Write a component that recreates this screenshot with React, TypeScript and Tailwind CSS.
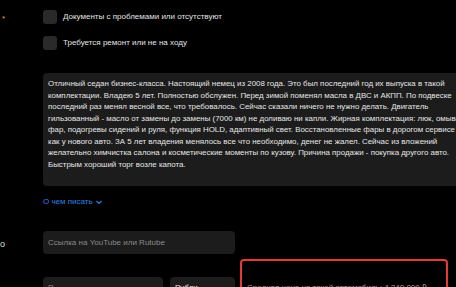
import React from 'react';

const LINES = [
  'Отличный седан бизнес-класса. Настоящий немец из 2008 года. Это был последний год их выпуска в такой',
  'комплектации. Владею 5 лет. Полностью обслужен. Перед зимой поменял масла в ДВС и АКПП. По подвеске',
  'последний раз менял весной все, что требовалось. Сейчас сказали ничего не нужно делать. Двигатель',
  'гильзованный - масло от замены до замены (7000 км) не доливаю ни капли. Жирная комплектация: люк, омыватели',
  'фар, подогревы сидений и руля, функция HOLD, адаптивный свет. Восстановленные фары в дорогом сервисе',
  'как у нового авто. ЗА 5 лет владения менялось все что необходимо, денег не жалел. Сейчас из вложений',
  'желательно химчистка салона и косметические моменты по кузову. Причина продажи - покупка другого авто.',
  'Быстрым хороший торг возле капота.',
];

const Label: React.FC<{ children?: React.ReactNode }> = ({ children }) => (
  <div className="w-[5px] shrink-0 flex justify-end overflow-hidden leading-[12px]">
    <span className="whitespace-nowrap">{children}</span>
  </div>
);

const Check: React.FC<{ text: string }> = ({ text }) => (
  <label className="flex items-center gap-[6px] h-[14px]">
    <span className="w-[14px] h-[14px] rounded-[3px] bg-[#2a2a2a]" />
    <span className="text-[8px] leading-[14px] text-[#e4e4e4]">{text}</span>
  </label>
);

export default function App() {
  return (
    <div className="w-[456px] h-[287px] overflow-hidden bg-black font-['Liberation_Sans',Arial,sans-serif] leading-none">
      {/* Состояние */}
      <div className="flex gap-[38px] pt-[10px]">
        <Label>
          <span className="text-[8px] text-[#f5a623]">*</span>
        </Label>
        <div className="flex flex-col gap-[12px]">
          <Check text="Документы с проблемами или отсутствуют" />
          <Check text="Требуется ремонт или не на ходу" />
        </div>
      </div>

      {/* Описание */}
      <div className="flex gap-[38px] mt-[23px]">
        <Label />
        <div className="flex-1 min-w-0">
          <div className="w-[440px] h-[113px] rounded-[4px] bg-[#1c1c1c] pl-[5px] pt-[5px] text-[7.9px] leading-[11.5px] text-[#e6e6e6] overflow-hidden">
            {LINES.map((l, i) => (
              <div key={i} className="whitespace-nowrap">{l}</div>
            ))}
          </div>
          <button className="mt-[11px] h-[10px] flex items-center gap-[2px] text-[8px] leading-[10px] text-[#2f80e8]">
            О чем писать
            <svg width="8" height="8" viewBox="0 0 8 8" fill="none" stroke="currentColor" strokeWidth="1.2">
              <path d="M1.5 3 L4 5.5 L6.5 3" />
            </svg>
          </button>
        </div>
      </div>

      {/* Видео */}
      <div className="flex gap-[38px] items-center mt-[24px] h-[23px]">
        <Label>
          <span className="text-[9px] text-[#dcdcdc]">Видео</span>
        </Label>
        <div className="w-[192px] h-[23px] rounded-[4px] bg-[#1c1c1c] flex items-center px-[5px] text-[8px] text-[#8a8a8a]">
          Ссылка на YouTube или Rutube
        </div>
      </div>

      {/* Цена */}
      <div className="flex gap-[38px] mt-[5px]">
        <Label />
        <div className="flex items-start">
          <div className="mt-[18px] w-[120px] h-[23px] rounded-[4px] bg-[#1c1c1c] px-[5px] pt-[7px] text-[8px] text-[#8a8a8a]">
            Р
          </div>
          <div className="ml-[7px] mt-[18px] w-[65px] h-[23px] rounded-[4px] bg-[#1c1c1c] pl-[5px] pr-[3px] pt-[7px] text-[8px] text-[#e6e6e6] flex justify-between">
            Рубли
            <svg width="8" height="8" viewBox="0 0 8 8" fill="none" stroke="#8a8a8a" strokeWidth="1">
              <path d="M1.5 3 L4 5.5 L6.5 3" />
            </svg>
          </div>
          <div className="ml-[5px] w-[208px] h-[50px] rounded-[4px] border-2 border-[#e53935] px-[5px] pt-[23px] text-[8px] text-[#a0a0a0] whitespace-nowrap">
            Средняя цена на такой автомобиль: 4 240 000 ₽
          </div>
        </div>
      </div>
    </div>
  );
}
